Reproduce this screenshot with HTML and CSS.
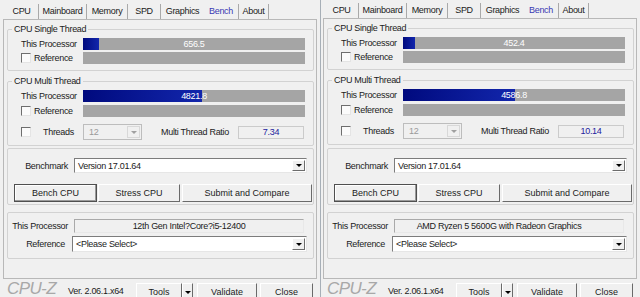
FILE: index.html
```html
<!DOCTYPE html>
<html lang="en">
<head>
  <meta charset="UTF-8">
  <title>CPU-Z Bench</title>
  <link rel="stylesheet" href="styles.css">
</head>
<body>
<div class="screen">

  <!-- left window : i5-12400 -->
  <div class="win">
    <div class="tabs">
      <div class="tab t-cpu">CPU</div>
      <div class="tab t-main">Mainboard</div>
      <div class="tab t-mem">Memory</div>
      <div class="tab t-spd">SPD</div>
      <div class="tab t-gfx">Graphics</div>
      <div class="tab t-bench active">Bench</div>
      <div class="tab t-about">About</div>
    </div>
    <div class="panel">
      <fieldset class="group single">
        <legend>CPU Single Thread</legend>
        <div class="bar-row">
          <span class="label">This Processor</span>
          <div class="bar"><div class="fill" style="width:16px"></div><span class="value">656.5</span></div>
        </div>
        <div class="bar-row">
          <span class="label"><span class="check"></span>Reference</span>
          <div class="bar"></div>
        </div>
      </fieldset>
      <fieldset class="group multi">
        <legend>CPU Multi Thread</legend>
        <div class="bar-row">
          <span class="label">This Processor</span>
          <div class="bar"><div class="fill" style="width:119px"></div><span class="value">4821.8</span></div>
        </div>
        <div class="bar-row">
          <span class="label"><span class="check"></span>Reference</span>
          <div class="bar"></div>
        </div>
        <div class="thread-row">
          <span class="label"><span class="check"></span><span class="threads">Threads</span></span>
          <div class="combo disabled"><span class="combo-text">12</span><span class="drop"><span class="arrow"></span></span></div>
          <span class="ratio-label">Multi Thread Ratio</span>
          <div class="ratio">7.34</div>
        </div>
      </fieldset>
      <div class="group bench">
        <div class="field-row">
          <span class="field-label">Benchmark</span>
          <div class="combo bench-combo"><span class="combo-text">Version 17.01.64</span><span class="drop"><span class="arrow"></span></span></div>
        </div>
        <div class="button-row">
          <button class="btn default w-bench">Bench CPU</button>
          <button class="btn w-stress">Stress CPU</button>
          <button class="btn w-submit">Submit and Compare</button>
        </div>
      </div>
      <div class="group proc">
        <div class="field-row">
          <span class="field-label">This Processor</span>
          <div class="readonly">12th Gen Intel?Core?i5-12400</div>
        </div>
        <div class="field-row ref">
          <span class="field-label">Reference</span>
          <div class="combo select"><span class="combo-text">&lt;Please Select&gt;</span><span class="drop"><span class="arrow"></span></span></div>
        </div>
      </div>
    </div>
    <div class="footer">
      <span class="logo">CPU-Z</span>
      <span class="ver-text">Ver. 2.06.1.x64</span>
      <button class="btn w-tools">Tools</button>
      <button class="btn w-tdrop"><span class="arrow"></span></button>
      <button class="btn w-validate">Validate</button>
      <button class="btn w-close">Close</button>
    </div>
  </div>

  <!-- right window : Ryzen 5 5600G -->
  <div class="win right">
    <div class="tabs">
      <div class="tab t-cpu">CPU</div>
      <div class="tab t-main">Mainboard</div>
      <div class="tab t-mem">Memory</div>
      <div class="tab t-spd">SPD</div>
      <div class="tab t-gfx">Graphics</div>
      <div class="tab t-bench active">Bench</div>
      <div class="tab t-about">About</div>
    </div>
    <div class="panel">
      <fieldset class="group single">
        <legend>CPU Single Thread</legend>
        <div class="bar-row">
          <span class="label">This Processor</span>
          <div class="bar"><div class="fill" style="width:12px"></div><span class="value">452.4</span></div>
        </div>
        <div class="bar-row">
          <span class="label"><span class="check"></span>Reference</span>
          <div class="bar"></div>
        </div>
      </fieldset>
      <fieldset class="group multi">
        <legend>CPU Multi Thread</legend>
        <div class="bar-row">
          <span class="label">This Processor</span>
          <div class="bar"><div class="fill" style="width:112px"></div><span class="value">4586.8</span></div>
        </div>
        <div class="bar-row">
          <span class="label"><span class="check"></span>Reference</span>
          <div class="bar"></div>
        </div>
        <div class="thread-row">
          <span class="label"><span class="check"></span><span class="threads">Threads</span></span>
          <div class="combo disabled"><span class="combo-text">12</span><span class="drop"><span class="arrow"></span></span></div>
          <span class="ratio-label">Multi Thread Ratio</span>
          <div class="ratio">10.14</div>
        </div>
      </fieldset>
      <div class="group bench">
        <div class="field-row">
          <span class="field-label">Benchmark</span>
          <div class="combo bench-combo"><span class="combo-text">Version 17.01.64</span><span class="drop"><span class="arrow"></span></span></div>
        </div>
        <div class="button-row">
          <button class="btn default w-bench">Bench CPU</button>
          <button class="btn w-stress">Stress CPU</button>
          <button class="btn w-submit">Submit and Compare</button>
        </div>
      </div>
      <div class="group proc">
        <div class="field-row">
          <span class="field-label">This Processor</span>
          <div class="readonly padded">AMD Ryzen 5 5600G with Radeon Graphics</div>
        </div>
        <div class="field-row ref">
          <span class="field-label">Reference</span>
          <div class="combo select"><span class="combo-text">&lt;Please Select&gt;</span><span class="drop"><span class="arrow"></span></span></div>
        </div>
      </div>
    </div>
    <div class="footer">
      <span class="logo">CPU-Z</span>
      <span class="ver-text">Ver. 2.06.1.x64</span>
      <button class="btn w-tools">Tools</button>
      <button class="btn w-tdrop"><span class="arrow"></span></button>
      <button class="btn w-validate">Validate</button>
      <button class="btn w-close">Close</button>
    </div>
  </div>

</div>
</body>
</html>
```

FILE: styles.css
```css
body {
  margin: 0;
  background-color: #f0f0f0;
  font-family: "Liberation Sans", Arial, sans-serif;
  font-size: 9px;
  letter-spacing: -0.3px;
  color: #1b1b1b;
  overflow: hidden;
}
.screen {
  display: flex;
  width: 640px;
  height: 297px;
}
.win {
  width: 320px;
  flex: none;
}
.win.right {
  box-shadow: inset 1px 0 #a7afb7;
}

/* tabs */
.tabs {
  display: flex;
  align-items: flex-end;
  height: 19px;
  padding-left: 5px;
  box-sizing: border-box;
}
.right .tabs {
  height: 18px;
}
.tab {
  height: 15px;
  line-height: 15px;
  text-align: center;
  border-right: 1px solid #a9a9a9;
  box-sizing: border-box;
}
.tab.active {
  color: #3a3ab4;
}
.t-cpu { width: 34px; }
.t-main { width: 48px; }
.t-mem { width: 41px; }
.t-spd { width: 33px; }
.t-gfx { width: 43px; border-right: none; }
.t-bench { width: 35px; }
.t-about { width: 30px; }

.panel {
  margin-left: 3px;
  width: 314px;
  height: 260px;
  box-sizing: border-box;
  border: 1px solid #b8b8b8;
  padding: 0 2px 0 3px;
}
.right .panel {
  height: 261px;
}

/* group boxes */
.group {
  margin: 0;
  border: 1px solid #d2d2d2;
  border-radius: 2px;
  min-width: 0;
}
.group legend {
  padding: 0 2px;
  line-height: 10px;
}
.single {
  margin-top: 4px;
  padding: 4px 7px 6px 4px;
}
.multi {
  margin-top: 5px;
  padding: 4px 7px 5px 4px;
}
.bench {
  margin-top: 2px;
  padding: 9px 0 2px 6px;
}
.right .bench {
  margin-top: 3px;
}
.proc {
  margin-top: 7px;
  padding: 6px 4px 6px 4px;
}

.bar-row {
  display: flex;
  align-items: center;
  height: 12px;
}
.bar-row + .bar-row {
  margin-top: 2px;
}
.multi .bar-row + .bar-row {
  margin-top: 3px;
}
.label {
  display: flex;
  align-items: center;
  width: 71px;
  padding-left: 9px;
  box-sizing: border-box;
  flex: none;
}
.check {
  width: 10px;
  height: 10px;
  box-sizing: border-box;
  margin-right: 3px;
  background-color: #fbfbfb;
  border: 1px solid;
  border-color: #6e6e6e #e4e4e4 #e4e4e4 #6e6e6e;
}
.bar {
  position: relative;
  width: 222px;
  height: 12px;
  background-color: #a5a5a5;
}
.fill {
  height: 100%;
  background: linear-gradient(to right, #000a7e, #1226ac);
}
.value {
  position: absolute;
  top: 0;
  left: 0;
  right: 0;
  line-height: 12px;
  text-align: center;
  color: #fff;
}

.thread-row {
  display: flex;
  align-items: center;
  height: 16px;
  margin-top: 7px;
}
.threads {
  margin-left: 9px;
}
.ratio-label {
  width: 77px;
  margin-left: 19px;
  flex: none;
}
.ratio {
  width: 66px;
  height: 13px;
  line-height: 11px;
  box-sizing: border-box;
  border: 1px solid #cbcbcb;
  text-align: center;
  color: #22229e;
}

/* combos and fields */
.combo {
  display: flex;
  align-items: center;
  box-sizing: border-box;
  background-color: #fff;
  border: 1px solid;
  border-color: #7c7c7c #e6e6e6 #e6e6e6 #7c7c7c;
  padding-left: 3px;
}
.combo-text {
  flex: 1;
  white-space: nowrap;
}
.drop {
  width: 13px;
  align-self: stretch;
  margin: 1px;
  display: flex;
  align-items: center;
  justify-content: center;
  box-sizing: border-box;
  background-color: #f0f0f0;
  border: 1px solid;
  border-color: #fff #6c6c6c #6c6c6c #fff;
}
.arrow {
  width: 0;
  height: 0;
  border-left: 3px solid transparent;
  border-right: 3px solid transparent;
  border-top: 3px solid #000;
}
.combo.disabled {
  width: 59px;
  height: 16px;
  background-color: #f0f0f0;
  border-color: #bdbdbd;
  color: #9a9a9a;
  padding-left: 5px;
}
.combo.disabled .drop {
  border-color: #d8d8d8;
}
.combo.disabled .arrow {
  border-top-color: #a0a0a0;
}
.bench-combo {
  width: 233px;
  height: 15px;
}
.combo.select {
  width: 235px;
  height: 16px;
}

.field-row {
  display: flex;
  align-items: center;
}
.field-label {
  width: 62px;
  padding-right: 6px;
  box-sizing: border-box;
  text-align: right;
  flex: none;
}
.bench .field-label {
  width: 60px;
}
.ref {
  margin-top: 3px;
}
.ref .field-label {
  width: 60px;
  padding-right: 7px;
}
.readonly {
  width: 230px;
  height: 14px;
  line-height: 12px;
  box-sizing: border-box;
  border: 1px solid;
  border-color: #a9a9a9 #e8e8e8 #e8e8e8 #a9a9a9;
  text-align: center;
  white-space: nowrap;
}
.readonly.padded {
  padding-right: 20px;
}

/* buttons */
.button-row {
  display: flex;
  margin-top: 11px;
}
.btn {
  height: 18px;
  padding: 0;
  font: inherit;
  color: inherit;
  background-color: #f0f0f0;
  border: 1px solid;
  border-color: #fff #6a6a6a #6a6a6a #fff;
  box-sizing: border-box;
  display: flex;
  align-items: center;
  justify-content: center;
}
.btn.default {
  border-color: #4f4f4f;
  box-shadow: inset -1px -1px #9a9a9a, inset 1px 1px #fff;
}
.w-bench { width: 83px; }
.w-stress { width: 82px; margin-left: 1px; }
.w-submit { width: 130px; margin-left: 2px; }

/* footer */
.footer {
  display: flex;
  align-items: flex-start;
  height: 18px;
}
.logo {
  width: 61px;
  margin: 3px 0 0 7px;
  font-size: 17px;
  line-height: 14px;
  font-style: italic;
  letter-spacing: -0.6px;
  color: #a8a8a8;
}
.ver-text {
  width: 68px;
  margin-top: 7px;
  line-height: 10px;
}
.footer .btn {
  margin-top: 4px;
}
.w-tools { width: 46px; }
.w-tdrop { width: 11px; }
.w-validate { width: 60px; margin-left: 4px; }
.w-close { width: 53px; margin-left: 3px; }
```
